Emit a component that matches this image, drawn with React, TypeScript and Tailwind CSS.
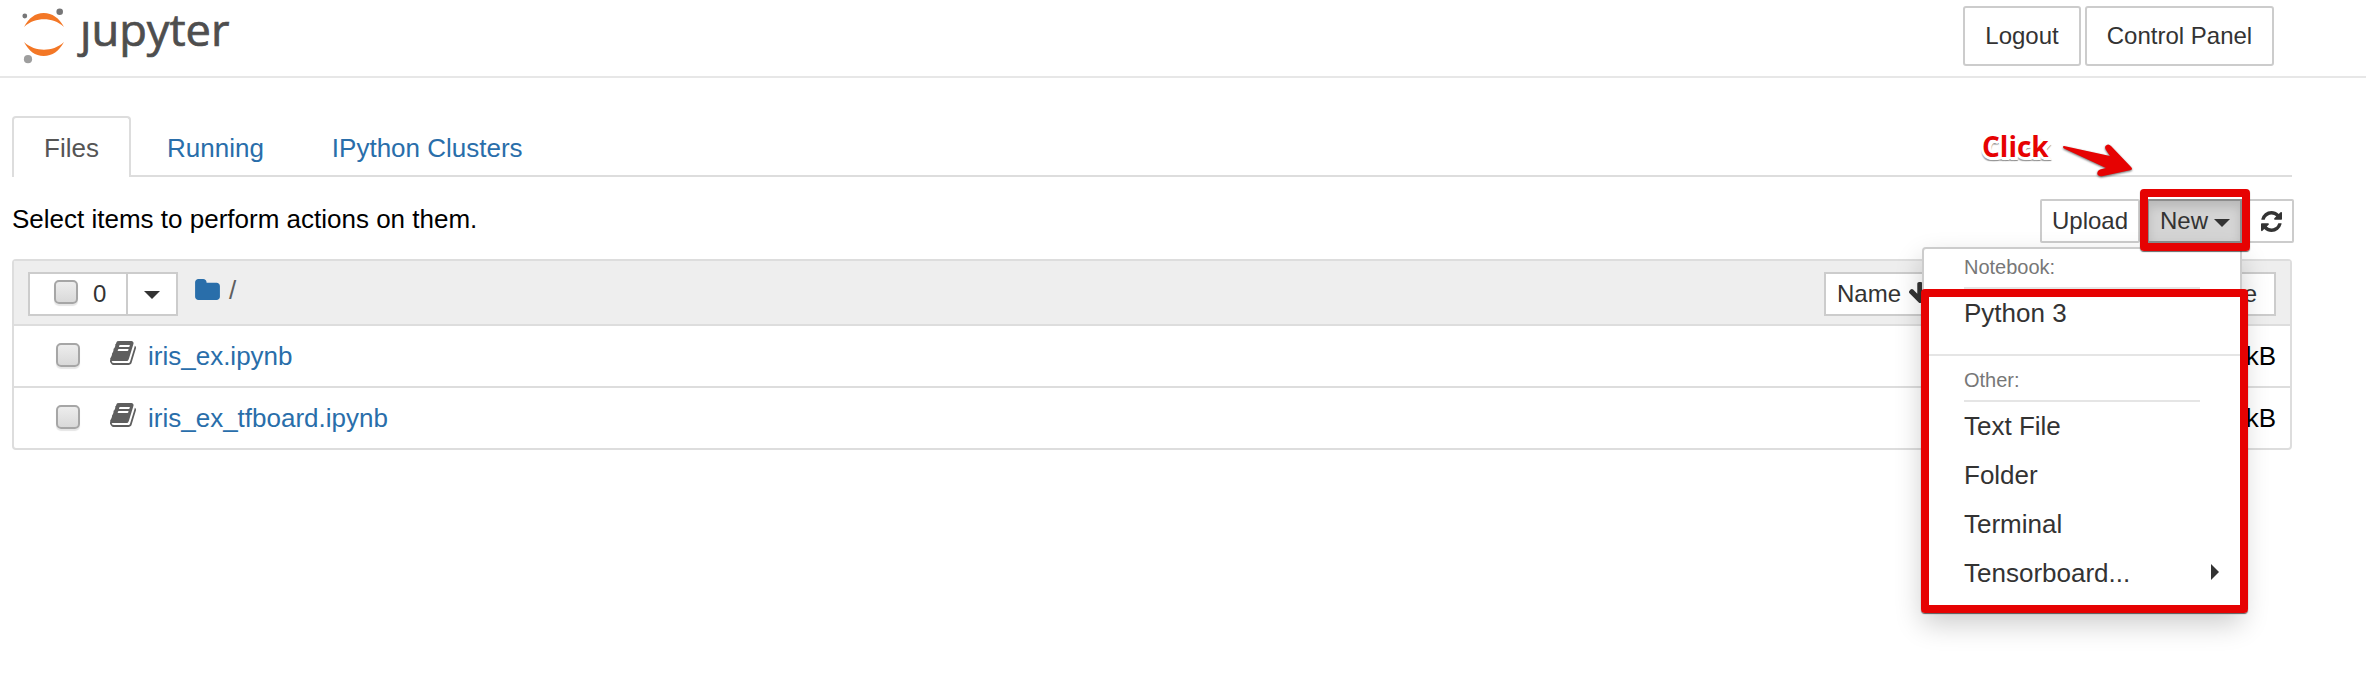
import React from 'react';

const BOOK =
  'M1639 478q40 57 18 129l-275 906q-19 64-76.5 107.5t-122.5 43.5h-923q-77 0-148.5-53.5t-99.5-131.5q-24-67-2-127 0-4 3-27t4-37q1-8-3-21.5t-3-19.5q2-11 8-21t16.5-23.5 16.5-23.5q23-38 45-91.5t30-91.5q3-10 .5-30t-.5-28q3-11 17-28t17-23q21-36 42-92t25-90q1-9-2.5-32t.5-28q4-13 22-30.5t22-22.5q19-26 42.5-84.5t27.5-96.5q1-8-3-25.5t-2-26.5q2-8 9-18t18-23 17-21q8-12 16.5-30.5t15-35 16-36 19.5-32 26.5-23.5 36-11.5 47.5 5.5l-1 3q38-9 51-9h761q74 0 114 56t18 130l-274 906q-36 119-71.5 153.5t-128.5 34.5h-869q-27 0-38 15-11 16-1 43 24 70 144 70h923q29 0 56-15.5t35-41.5l300-987q7-22 5-57 38 15 59 43zm-1064 2q-4 13 2 22.5t20 9.5h608q13 0 25.5-9.5t16.5-22.5l21-64q4-13-2-22.5t-20-9.5h-608q-13 0-25.5 9.5t-16.5 22.5zm-83 256q-4 13 2 22.5t20 9.5h608q13 0 25.5-9.5t16.5-22.5l21-64q4-13-2-22.5t-20-9.5h-608q-13 0-25.5 9.5t-16.5 22.5z';
const FOLDER =
  'M1664 608v704q0 92-66 158t-158 66h-1216q-92 0-158-66t-66-158v-960q0-92 66-158t158-66h320q92 0 158 66t66 158v32h672q92 0 158 66t66 158z';
const REFRESH =
  'M1511 928q0 5-1 7-64 268-268 434.5t-478 166.5q-146 0-282.5-55t-243.5-157l-129 129q-19 19-45 19t-45-19-19-45v-448q0-26 19-45t45-19h448q26 0 45 19t19 45-19 45l-137 137q71 66 161 102t187 36q134 0 250-65t186-179q11-17 53-117 8-23 30-23h192q13 0 22.5 9.5t9.5 22.5zm25-800v448q0 26-19 45t-45 19h-448q-26 0-45-19t-19-45 19-45l138-138q-148-137-349-137-134 0-250 65t-186 179q-11 17-53 117-8 23-30 23h-199q-13 0-22.5-9.5t-9.5-22.5v-7q65-268 270-434.5t480-166.5q146 0 284 55.5t245 156.5l130-129q19-19 45-19t45 19 19 45z';
const ARROW_DOWN =
  'M1611 832q0 53-37 90l-651 652q-39 37-91 37-53 0-90-37l-651-652q-38-36-38-90 0-53 38-91l74-75q39-37 91-37 53 0 90 37l294 294v-704q0-52 38-90t90-38h128q52 0 90 38t38 90v704l294-294q37-37 90-37 52 0 91 37l75 75q37 39 37 91z';

function Logo() {
  return (
    <svg width="220" height="76" viewBox="0 0 220 76" className="block overflow-visible">
      <path d="M2 27C7 18 13 13 21.700 13S37 18 42 27C36 21.500 29 19.300 22 19.300S8 21.500 2 27Z" fill="#f37726" />
      <path d="M2 42C7 51 13 56 21.700 56S37 51 42 42C36 47.500 29 49.700 22 49.700S8 47.500 2 42Z" fill="#f37726" />
      <circle cx="2.800" cy="16" r="2.400" fill="#767677" />
      <circle cx="37.700" cy="11.700" r="3.300" fill="#767677" />
      <circle cx="6" cy="59.200" r="4.100" fill="#9e9e9e" />
      <text
        x="58"
        y="46"
        fontFamily="Open Sans, sans-serif"
        fontSize="44"
        fill="#4e4e4e"
        stroke="#4e4e4e"
        strokeWidth="0.700"
        textLength="149.500"
        lengthAdjust="spacingAndGlyphs"
      >
        ȷupyter
      </text>
    </svg>
  );
}

function Caret() {
  return <span className="h-0 w-0 border-x-[8px] border-t-[8px] border-x-transparent border-t-[#333]" />;
}

function Check() {
  return (
    <span className="h-6 w-6 shrink-0 rounded-[5px] border-2 border-[#a6a6a6] bg-linear-to-b from-[#ededed] to-[#d9d9d9] shadow-[0_2px_1px_rgba(0,0,0,0.1)]" />
  );
}

function FileRow({ name }: { name: string }) {
  return (
    <div className="flex h-[62px] items-center border-t-2 border-[#ddd] pl-[42px] pr-[14px]">
      <span className="mb-[2px] flex">
        <Check />
      </span>
      <svg className="mb-[6px] ml-[30px] shrink-0" width="26" height="24" viewBox="0 128 1664 1536" fill="#5e5e5e">
        <path d={BOOK} />
      </svg>
      <a className="ml-3 text-[#296eaa]">{name}</a>
      <span className="ml-auto text-black">1 kB</span>
    </div>
  );
}

function MenuItem({ label, more }: { label: string; more?: boolean }) {
  return (
    <div className="flex h-[49px] items-center justify-between pl-10 pr-[21px]">
      <span className="-mt-[2px]">{label}</span>
      {more && <span className="mb-1 h-0 w-0 border-y-[8px] border-l-[8px] border-y-transparent border-l-[#333]" />}
    </div>
  );
}

function MenuHeader({ label }: { label: string }) {
  return (
    <div className="ml-10 mr-10 h-[40px] border-b-2 border-[#e5e5e5] text-[20px] leading-[36px] text-[#777]">
      {label}
    </div>
  );
}

function NewMenu() {
  return (
    <div className="absolute right-0 top-[48px] h-[365px] w-[320px] rounded-[4px] border-2 border-[#ccc] bg-white text-[26px] text-[#333] shadow-[0_12px_28px_rgba(0,0,0,0.2)]">
      <div>
        <MenuHeader label="Notebook:" />
        <MenuItem label="Python 3" />
      </div>
      <div className="mt-4 h-[2px] bg-[#e5e5e5]" />
      <div className="mt-[6px]">
        <MenuHeader label="Other:" />
        <MenuItem label="Text File" />
        <MenuItem label="Folder" />
        <MenuItem label="Terminal" />
        <MenuItem label="Tensorboard..." more />
      </div>
    </div>
  );
}

export default function App() {
  return (
    <div
      className="relative h-[688px] w-[2366px] overflow-hidden bg-white text-[26px] leading-[36px] text-black"
      style={{ fontFamily: '"Liberation Sans", Arial, sans-serif' }}
    >
      <header className="flex h-[78px] justify-between border-b-2 border-[#e7e7e7] pl-[22px] pr-[92px]">
        <Logo />
        <div className="mt-[6px] flex gap-1 text-[24px] text-[#333]">
          <button className="h-[60px] w-[118px] rounded-[3px] border-2 border-[#ccc]">Logout</button>
          <button className="h-[60px] w-[189px] rounded-[3px] border-2 border-[#ccc]">Control Panel</button>
        </div>
      </header>

      <main className="ml-3 mt-[38px] w-[2280px]">
        <nav className="flex h-[61px] text-[#296eaa]">
          <div className="w-[119px] rounded-t-[4px] border-2 border-b-0 border-[#ddd] pl-[30px] pt-[12px] text-[#555]">Files</div>
          <div className="flex flex-1 border-b-2 border-[#ddd] pt-[14px]">
            <span className="ml-9">Running</span>
            <span className="ml-[68px]">IPython Clusters</span>
          </div>
        </nav>

        <div className="mt-[22px] -mr-[2px] flex h-[44px] justify-between">
          <p className="pt-[2px]">Select items to perform actions on them.</p>
          <div className="flex text-[24px] text-[#333]">
            <button className="mr-[7px] w-[100px] rounded-[2px] border-2 border-[#ccc]">Upload</button>
            <div className="relative">
              <button className="flex h-11 w-[95px] items-center gap-[6px] border-2 border-[#8c8c8c] bg-[#d4d4d4] pl-[11px] shadow-[inset_0_6px_10px_rgba(0,0,0,0.125)]">
                New
                <span className="mt-[3px] flex">
                  <Caret />
                </span>
              </button>
              <NewMenu />
            </div>
            <button className="ml-[6px] flex w-[46px] items-center justify-center rounded-[2px] border-2 border-[#ccc]">
              <svg width="21" height="21" viewBox="0 0 1536 1536" fill="#333">
                <path d={REFRESH} />
              </svg>
            </button>
          </div>
        </div>

        <section className="mt-4 rounded-[4px] border-2 border-[#ddd]">
          <div className="flex h-[63px] items-start bg-[#eee] pl-[14px] pr-[14px] pt-[11px] text-[24px] text-[#333]">
            <div className="flex h-11 w-[150px] border-2 border-[#ccc] bg-white">
              <div className="flex w-[98px] items-center gap-[15px] border-r-2 border-[#ccc] pl-6">
                <span className="-mt-1 flex">
                  <Check />
                </span>
                <span>0</span>
              </div>
              <div className="flex flex-1 items-center justify-center pt-[2px]">
                <Caret />
              </div>
            </div>
            <svg className="ml-[17px] mt-[7px]" width="25" height="21" viewBox="0 128 1664 1408" fill="#296eaa">
              <path d={FOLDER} />
            </svg>
            <span className="ml-[9px] text-[26px] text-[#5e5e5e]">/</span>
            <div className="ml-auto flex h-11 w-[452px] justify-between">
              <button className="flex w-[110px] items-center gap-2 border-2 border-[#ccc] bg-white pl-[11px]">
                Name
                <svg className="mb-1 shrink-0" width="22" height="22" viewBox="53 64 1558 1547" fill="#333">
                  <path d={ARROW_DOWN} />
                </svg>
              </button>
              <button className="w-[135px] border-2 border-[#ccc] bg-white pr-[17px] text-right">File size</button>
            </div>
          </div>
          <FileRow name="iris_ex.ipynb" />
          <FileRow name="iris_ex_tfboard.ipynb" />
        </section>
      </main>

      <div className="absolute left-[2140px] top-[189px] z-20 h-[62px] w-[110px] rounded-[4px] border-[8px] border-[#e60202] shadow-[0_1px_1px_rgba(0,0,0,0.6)]" />
      <div className="absolute left-[1921px] top-[289px] z-20 h-[324px] w-[327px] rounded-[4px] border-[8px] border-[#e60202] shadow-[0_1px_1px_rgba(0,0,0,0.6)]" />
      <span
        className="absolute left-[1982px] top-[128px] z-20 text-[28px] font-bold text-[#e60202]"
        style={{
          fontFamily: '"Open Sans", sans-serif',
          textShadow:
            '3px 0 #fff,-3px 0 #fff,0 3px #fff,0 -3px #fff,2px 2px #fff,-2px 2px #fff,2px -2px #fff,-2px -2px #fff,3px 3px #fff,0 4px 1px #999,-2px 4px 1px #aaa,3px 4px 1px #888',
        }}
      >
        Click
      </span>
      <svg
        className="absolute left-[2060px] top-[140px] z-20 overflow-visible drop-shadow-[0_1px_1px_rgba(0,0,0,0.6)]"
        width="76"
        height="40"
        viewBox="0 0 76 40"
      >
        <path
          d="M4 6Q2 6.500 4 8.500L46 28L40 29.500Q36.500 31 37.500 34.500Q39 37 43 36L71 30Q73 29 71 27L51 6Q48 3 45.500 6Q44.500 8 46 10L50 16Z"
          fill="#e60202"
        />
      </svg>
    </div>
  );
}
